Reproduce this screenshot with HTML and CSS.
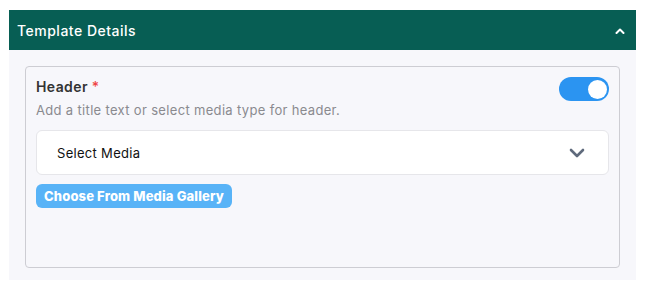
FILE: index.html
```html
<!DOCTYPE html>
<html lang="en">
<head>
<meta charset="utf-8">
<title>Template Details</title>
<link rel="stylesheet" href="styles.css">
</head>
<body>
<section class="panel">
  <div class="panel-head">
    <span class="panel-title">Template Details</span>
    <svg class="chev-up" width="10" height="6" viewBox="0 0 10 6"><path d="M1.5 5 L5 1.5 L8.5 5" fill="none" stroke="#fff" stroke-width="2" stroke-linecap="round" stroke-linejoin="round"/></svg>
  </div>
  <div class="panel-body">
    <div class="card">
      <div class="row">
        <div class="info">
          <div class="label">Header <span class="req">*</span></div>
          <div class="desc">Add a title text or select media type for header.</div>
        </div>
        <div class="toggle"><span class="knob"></span></div>
      </div>
      <div class="select">
        <span class="select-text">Select Media</span>
        <svg class="chev-down" width="16" height="10" viewBox="0 0 16 10"><path d="M2 2 L8 8 L14 2" fill="none" stroke="#5f6a7c" stroke-width="2.6" stroke-linecap="round" stroke-linejoin="round"/></svg>
      </div>
      <button class="gallery-btn" type="button">Choose From Media Gallery</button>
    </div>
  </div>
</section>
</body>
</html>
```
FILE: styles.css
```css
* { box-sizing: border-box; }
body {
  margin: 0;
  background: #ffffff;
  font-family: "Inter", "Open Sans", sans-serif;
}
.panel {
  margin: 10px 9px 0 9px;
  width: 627px;
}
.panel-head {
  height: 40px;
  background: #075e54;
  display: flex;
  align-items: center;
  justify-content: space-between;
  padding: 0 11px 0 8px;
}
.panel-title {
  color: #ffffff;
  font-size: 14px;
  font-weight: 500;
  letter-spacing: 0.5px;
}
.chev-up { display: block; margin-top: 2px; }
.panel-body {
  background: #f7f7fb;
  height: 230px;
  padding: 16px 16px 12px 16px;
}
.card {
  height: 202px;
  border: 1px solid #cdcdd3;
  border-radius: 4px;
  padding: 10px 10px 0 10px;
}
.row {
  display: flex;
  justify-content: space-between;
  align-items: flex-start;
}
.label {
  font-size: 14px;
  line-height: 20px;
  font-weight: 600;
  color: #333333;
  letter-spacing: 0.4px;
}
.req { color: #ef4444; font-weight: 500; }
.desc {
  margin-top: 3px;
  font-size: 13px;
  line-height: 20px;
  color: #8a8a8f;
  letter-spacing: 0.33px;
}
.toggle {
  width: 50px;
  height: 24px;
  border-radius: 12px;
  background: #2b94f1;
  display: flex;
  align-items: center;
  justify-content: flex-end;
  padding-right: 2px;
}
.knob {
  width: 19px;
  height: 19px;
  border-radius: 50%;
  background: #ffffff;
}
.select {
  margin-top: 10px;
  height: 45px;
  background: #ffffff;
  border: 1px solid #e6e6ea;
  border-radius: 6px;
  display: flex;
  align-items: center;
  justify-content: space-between;
  padding: 0 23px 0 20px;
}
.select-text {
  font-size: 13px;
  color: #111111;
  letter-spacing: 0.3px;
}
.chev-down { display: block; }
.gallery-btn {
  margin-top: 9px;
  height: 24px;
  padding: 0 8px;
  border: none;
  border-radius: 6px;
  background: #58b3f7;
  color: #ffffff;
  font-family: inherit;
  font-size: 13px;
  font-weight: 800;
  letter-spacing: 0.14px;
  display: block;
}
```
